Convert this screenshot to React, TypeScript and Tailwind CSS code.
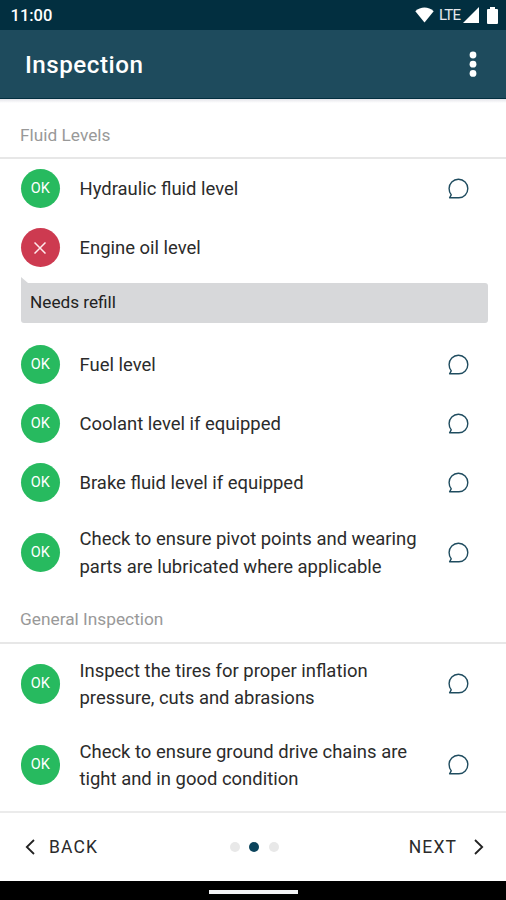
import React from 'react';

type Item = { label: string; ok: boolean; note?: string; tall?: boolean };

const fluidLevels: Item[] = [
  { label: 'Hydraulic fluid level', ok: true },
  { label: 'Engine oil level', ok: false, note: 'Needs refill' },
  { label: 'Fuel level', ok: true },
  { label: 'Coolant level if equipped', ok: true },
  { label: 'Brake fluid level if equipped', ok: true },
  { label: 'Check to ensure pivot points and wearing parts are lubricated where applicable', ok: true, tall: true }
];

const generalInspection: Item[] = [
  { label: 'Inspect the tires for proper inflation pressure, cuts and abrasions', ok: true, tall: true },
  { label: 'Check to ensure ground drive chains are tight and in good condition', ok: true, tall: true }
];

const CommentIcon = () => (
  <svg className="w-[22px] h-[22px]" viewBox="0 0 22 22" fill="none" stroke="#1f4c5f" strokeWidth="1.4" strokeLinejoin="round">
    <path d="M1.6 19.8 L3.2 16.8 C1.8 15.2 1.1 13 1.1 10.6 A9.3 9.2 0 0 1 10.5 1.2 A9.3 9.2 0 0 1 19.8 10.5 C19.8 15.6 16.1 19.8 10.9 19.8 Z" />
  </svg>
);

const StatusBar = () => (
  <div className="h-[30px] shrink-0 bg-[#022f40] text-white flex items-center justify-between pl-[10.5px] pr-2">
    <span className="text-[16.5px] font-medium leading-none pt-[3px]">11:00</span>
    <div className="flex items-center">
      <svg className="w-[19px] h-4" viewBox="0 0 19 16" fill="white">
        <path d="M0.3 4.2 C5.5 -0.7 13.5 -0.7 18.7 4.2 L9.5 15.6 Z" />
      </svg>
      <span className="ml-[5px] w-[22px] pt-px text-[15px] leading-none tracking-[-0.7px] text-gray-200">LTE</span>
      <svg className="ml-[2px] w-4 h-4" viewBox="0 0 16 16" fill="white">
        <path d="M16 0 V16 H0 Z" />
      </svg>
      <svg className="ml-2 w-[11px] h-[17px]" viewBox="0 0 11 17" fill="white">
        <path d="M3 0 H8 V2 H10 Q11 2 11 3 V16 Q11 17 10 17 H1 Q0 17 0 16 V3 Q0 2 1 2 H3 Z" />
      </svg>
    </div>
  </div>
);

const SectionTitle = ({ title, className }: { title: string; className: string }) => (
  <h2 className={`border-b-2 border-[#e7e7e7] pl-5 text-[17.3px] leading-6 text-[#999999] ${className}`}>
    {title}
  </h2>
);

const Row = ({ item }: { item: Item }) => (
  <>
    <div className={`flex items-center pl-[20.5px] pr-[36.5px] ${item.tall ? 'h-[81px]' : 'h-[59px]'}`}>
      {item.ok ? (
        <div className="size-[39.5px] shrink-0 rounded-full bg-[#27ba5f] text-white text-[14.5px] flex items-center justify-center">
          OK
        </div>
      ) : (
        <div className="size-[39.5px] shrink-0 rounded-full bg-[#cd3a50] flex items-center justify-center">
          <svg className="size-3" viewBox="0 0 12 12" stroke="#ffe9ec" strokeWidth="1.5">
            <path d="M0.5 0.5 L11.5 11.5 M11.5 0.5 L0.5 11.5" />
          </svg>
        </div>
      )}
      <p className="ml-[19.5px] w-[345px] shrink-0 pt-0.5 text-[18.45px] leading-[27.5px] text-[#2b2b2b]">{item.label}</p>
      <div className="ml-auto">{!item.note && <CommentIcon />}</div>
    </div>
    {item.note && (
      <div className="ml-[20.5px] mr-[18px] mb-[12.5px]">
        <svg className="block w-2 h-1.5" viewBox="0 0 8 6" fill="#d7d8da">
          <path d="M0 0 L7 6 H0 Z" />
        </svg>
        <div className="h-[39.5px] rounded-[3px] rounded-tl-none bg-[#d7d8da] pl-[9.5px] flex items-center text-[17.2px] text-[#222222]">
          {item.note}
        </div>
      </div>
    )}
  </>
);

const Footer = () => (
  <div className="h-[70px] shrink-0 border-t-2 border-[#ebebeb] pl-[25px] pr-[22px] flex items-center justify-between text-[17.5px] tracking-[1.1px] text-[#2b2b2b]">
    <button className="flex items-center">
      <svg className="w-[10px] h-4" viewBox="0 0 10 16" fill="none" stroke="#222222" strokeWidth="1.8">
        <path d="M9 1 L1.8 8 L9 15" />
      </svg>
      <span className="ml-[14px]">BACK</span>
    </button>
    <div className="flex items-center gap-[9.5px] pl-0.5">
      <span className="size-[10px] rounded-full bg-[#e8e8e8]" />
      <span className="size-[10px] rounded-full bg-[#0b445c]" />
      <span className="size-[10px] rounded-full bg-[#e8e8e8]" />
    </div>
    <button className="flex items-center">
      <span className="mr-[17px]">NEXT</span>
      <svg className="w-[10px] h-4" viewBox="0 0 10 16" fill="none" stroke="#222222" strokeWidth="1.8">
        <path d="M1 1 L8.2 8 L1 15" />
      </svg>
    </button>
  </div>
);

const App = () => {
  return (
    <div className="w-[506px] h-[900px] overflow-hidden flex flex-col bg-white font-[Roboto,sans-serif]">
      <StatusBar />
      <header className="h-[69px] shrink-0 bg-[#1e4b5d] border-b border-[#022f40] pl-[25px] pr-[29px] flex items-center justify-between">
        <h1 className="text-white text-[24.2px] font-medium tracking-[0.5px] pt-[3px]">Inspection</h1>
        <svg className="w-2 h-[26px]" viewBox="0 0 8 26" fill="white">
          <circle cx="4" cy="4" r="3.4" />
          <circle cx="4" cy="13.2" r="3.4" />
          <circle cx="4" cy="22.4" r="3.4" />
        </svg>
      </header>
      <div className="h-1 shrink-0 bg-linear-to-b from-[#e4e4ea] to-white" />

      <main className="flex-1 min-h-0">
        <SectionTitle title="Fluid Levels" className="pt-5 h-[56px]" />
        {fluidLevels.map((item) => (
          <Row key={item.label} item={item} />
        ))}
        <SectionTitle title="General Inspection" className="pt-3.5 h-[50.5px]" />
        {generalInspection.map((item) => (
          <Row key={item.label} item={item} />
        ))}
      </main>

      <Footer />
      <div className="h-[19px] shrink-0 bg-black flex items-center justify-center">
        <div className="w-[89px] h-1 bg-gray-100 mt-0.5" />
      </div>
    </div>
  );
};

export default App;
